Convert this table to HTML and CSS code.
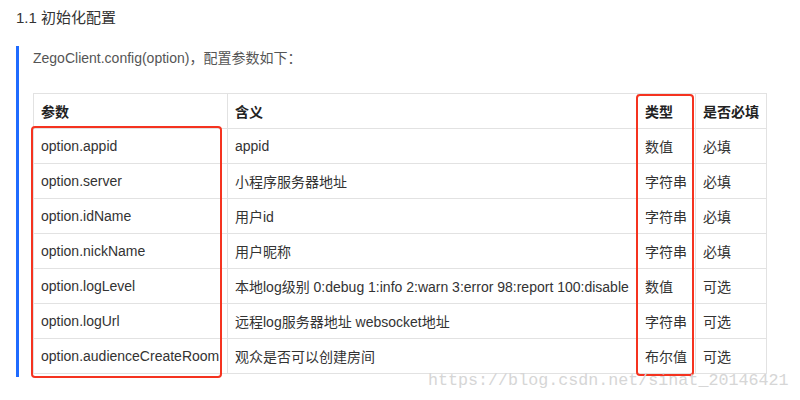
FILE: index.html
```html
<!DOCTYPE html>
<html lang="zh-CN">
<head>
  <meta charset="UTF-8">
  <title>初始化配置</title>
  <link rel="stylesheet" href="styles.css">
</head>
<body>
  <h3 class="title">1.1 初始化配置</h3>
  <div class="quote">
    <p class="intro">ZegoClient.config(option)，配置参数如下：</p>
    <div class="table-wrap">
      <table class="params">
        <thead>
          <tr>
            <th class="c-name">参数</th>
            <th class="c-desc">含义</th>
            <th class="c-type">类型</th>
            <th class="c-req">是否必填</th>
          </tr>
        </thead>
        <tbody>
          <tr><td>option.appid</td><td>appid</td><td>数值</td><td>必填</td></tr>
          <tr><td>option.server</td><td>小程序服务器地址</td><td>字符串</td><td>必填</td></tr>
          <tr><td>option.idName</td><td>用户id</td><td>字符串</td><td>必填</td></tr>
          <tr><td>option.nickName</td><td>用户昵称</td><td>字符串</td><td>必填</td></tr>
          <tr><td>option.logLevel</td><td>本地log级别 0:debug 1:info 2:warn 3:error 98:report 100:disable</td><td>数值</td><td>可选</td></tr>
          <tr><td>option.logUrl</td><td>远程log服务器地址 websocket地址</td><td>字符串</td><td>可选</td></tr>
          <tr><td>option.audienceCreateRoom</td><td>观众是否可以创建房间</td><td>布尔值</td><td>可选</td></tr>
        </tbody>
      </table>
      <!-- annotation boxes -->
      <div class="mark mark-name"></div>
      <div class="mark mark-type"></div>
    </div>
  </div>
  <div class="watermark">https://blog.csdn.net/sinat_20146421</div>
</body>
</html>
```

FILE: styles.css
```css
body {
  margin: 0;
  padding: 0 0 0 16px;
  font-family: "Liberation Sans", "Noto Sans CJK SC", sans-serif;
  color: #333;
  background: #fff;
  position: relative;
  height: 400px;
  overflow: hidden;
}
.title {
  margin: 0;
  padding-top: 8px;
  font-size: 15px;
  font-weight: normal;
  line-height: 20px;
  color: #333;
}
.quote {
  margin-top: 18px;
  border-left: 3px solid #1f6bff;
  padding: 0 0 4px 14px;
  height: 327px;
}
.intro {
  margin: 0;
  padding-top: 2px;
  font-size: 14px;
  line-height: 20px;
  color: #555;
}
.table-wrap {
  position: relative;
  margin-top: 25px;
  width: 733px;
}
.params {
  border-collapse: collapse;
  font-size: 14px;
  table-layout: fixed;
  width: 733px;
}
.params th, .params td {
  border: 1px solid #e2e2e2;
  height: 34px;
  padding: 0 7px;
  text-align: left;
  white-space: nowrap;
  overflow: hidden;
}
.params th {
  font-weight: bold;
  color: #222;
}
.c-name { width: 179px; }
.c-desc { width: 395px; }
.c-type { width: 43px; }
.c-req { width: 56px; }
.mark {
  position: absolute;
  border: 2px solid #f5331f;
  border-radius: 4px;
}
.mark-name {
  left: -2px;
  top: 33px;
  width: 187px;
  height: 248px;
}
.mark-type {
  left: 603px;
  top: 1px;
  width: 54px;
  height: 278px;
}
.watermark {
  position: absolute;
  left: 428px;
  top: 371px;
  font-family: "Liberation Mono", monospace;
  font-size: 16.7px;
  color: #d6d6d6;
}
```
